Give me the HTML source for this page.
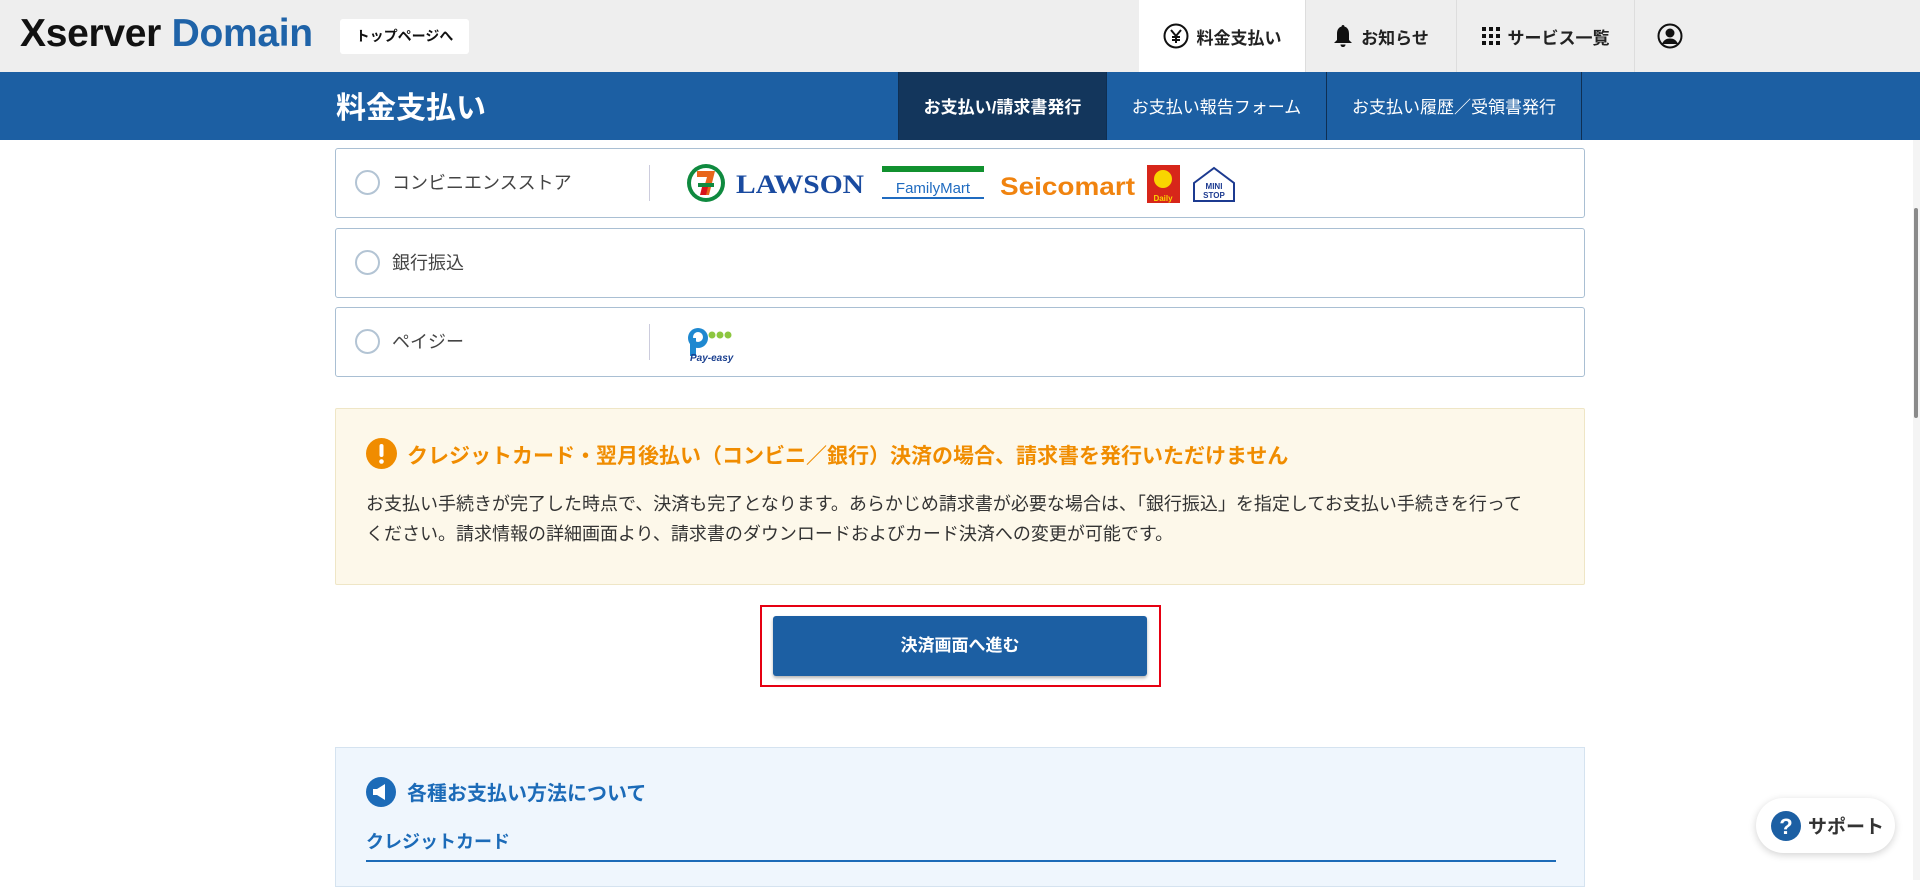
<!DOCTYPE html>
<html><head><meta charset="utf-8">
<style>
*{margin:0;padding:0;box-sizing:border-box}
body{width:1920px;height:880px;overflow:hidden;background:#fff;font-family:"Liberation Sans","Noto Sans CJK JP",sans-serif;color:#333;position:relative}
.a{position:absolute}
.hdr{left:0;top:0;width:1920px;height:72px;background:#eeeeee}
.logo{left:20px;top:12px;font-size:39px;font-weight:bold;letter-spacing:-0.3px;white-space:nowrap}
.topbtn{left:340px;top:19px;width:129px;height:35px;background:#fff;border-radius:3px;font-size:14px;font-weight:bold;color:#111;text-align:center;line-height:35px}
.nav{top:0;height:72px;display:flex;align-items:center;justify-content:center;font-size:17px;font-weight:bold;color:#222;border-left:1px solid #ddd;gap:8px}
.bar{left:0;top:72px;width:1920px;height:68px;background:#1c5fa3}
.ttl{left:336px;top:83px;font-size:30px;font-weight:bold;color:#fff}
.tab{top:72px;height:68px;color:#fff;font-size:17px;display:flex;align-items:center;justify-content:center;border-left:1px solid #0f2f52;padding-bottom:2px}
.row{left:335px;width:1250px;height:70px;border:1px solid #a9bfd3;border-radius:3px}
.radio{left:19px;width:25px;height:25px;border:2px solid #b3c4d4;border-radius:50%;top:21px}
.lbl{left:56px;top:20px;font-size:18px;color:#444}
.div{left:313px;top:16px;width:1px;height:36px;background:#ccd}
.warn{left:335px;top:408px;width:1250px;height:177px;background:#fdf8ea;border:1px solid #efe6c6;border-radius:2px}
.btn{left:773px;top:616px;width:374px;height:60px;background:#1c5fa3;border-radius:3px;color:#fff;font-size:17px;font-weight:bold;text-align:center;line-height:60px;box-shadow:0 2px 3px rgba(0,0,0,.3)}
.red{left:760px;top:605px;width:401px;height:82px;border:2px solid #e60012}
.info{left:335px;top:747px;width:1250px;height:140px;background:#eff6fd;border:1px solid #d5e3f0}
</style></head><body>
<div class="a hdr"></div>
<div class="a logo"><span style="color:#111">Xserver</span> <span style="color:#1f63a8">Domain</span></div>
<div class="a topbtn">トップページへ</div>
<div class="a nav" style="left:1139px;width:166px;background:#fff;border-left:none">
<svg width="26" height="26" viewBox="0 0 26 26"><circle cx="13" cy="13" r="11.5" fill="none" stroke="#111" stroke-width="2"/><path d="M8 7l5 6 5-6M13 13v7M9 14h8M9 17h8" fill="none" stroke="#111" stroke-width="2"/></svg>料金支払い</div>
<div class="a nav" style="left:1305px;width:151px">
<svg width="20" height="24" viewBox="0 0 20 24"><path d="M10 1c1 0 1.5.8 1.5 1.6C15 3.5 16 6.5 16 10v6l3 3H1l3-3v-6c0-3.5 1-6.5 4.5-7.4C8.5 1.8 9 1 10 1zM7.5 20.5h5c0 1.5-1 2.5-2.5 2.5s-2.5-1-2.5-2.5z" fill="#111"/></svg>お知らせ</div>
<div class="a nav" style="left:1456px;width:178px">
<svg width="18" height="18" viewBox="0 0 18 18" fill="#111"><rect x="0" y="0" width="4" height="4"/><rect x="7" y="0" width="4" height="4"/><rect x="14" y="0" width="4" height="4"/><rect x="0" y="7" width="4" height="4"/><rect x="7" y="7" width="4" height="4"/><rect x="14" y="7" width="4" height="4"/><rect x="0" y="14" width="4" height="4"/><rect x="7" y="14" width="4" height="4"/><rect x="14" y="14" width="4" height="4"/></svg>サービス一覧</div>
<div class="a nav" style="left:1634px;width:70px;border-right:none">
<svg width="26" height="26" viewBox="0 0 26 26"><circle cx="13" cy="13" r="11.5" fill="none" stroke="#111" stroke-width="2"/><circle cx="13" cy="10" r="4.5" fill="#111"/><path d="M5 21c1.5-4 4.5-5.5 8-5.5s6.5 1.5 8 5.5" fill="#111"/></svg></div>
<div class="a bar"></div>
<div class="a ttl">料金支払い</div>
<div class="a tab" style="left:898px;width:208px;background:#13365c;font-weight:bold">お支払い/請求書発行</div>
<div class="a tab" style="left:1106px;width:220px">お支払い報告フォーム</div>
<div class="a tab" style="left:1326px;width:256px;border-right:1px solid #0f2f52">お支払い履歴／受領書発行</div>

<div class="a row" style="top:148px"><div class="a radio"></div><div class="a lbl">コンビニエンスストア</div><div class="a div"></div>
<svg class="a" style="left:350px;top:14px" width="560" height="42" viewBox="0 0 560 42">
<circle cx="20" cy="20" r="19" fill="#0f8a3f"/><circle cx="20" cy="20" r="15" fill="#fff"/><path d="M11 8h18l-6 24h-7l5-18h-10z" fill="#e8651b"/><rect x="12" y="20" width="16" height="4" fill="#0f8a3f"/><path d="M16 24h6l-2 8h-6z" fill="#d8121b"/>
<text x="50" y="30" font-family="Liberation Serif,serif" font-weight="bold" font-size="26" fill="#1a4ba0" textLength="128" lengthAdjust="spacingAndGlyphs">LAWSON</text>
<rect x="196" y="3" width="102" height="6" fill="#11912f"/><text x="247" y="30" text-anchor="middle" font-size="15" fill="#1f6bc0">FamilyMart</text><rect x="196" y="34" width="102" height="2" fill="#1f6bc0"/>
<text x="314" y="32" font-weight="bold" font-size="25" fill="#f0830f" textLength="135" lengthAdjust="spacingAndGlyphs">Seicomart</text>
<rect x="461" y="2" width="33" height="38" fill="#d7261a"/><circle cx="477" cy="16" r="9" fill="#f9d500"/><text x="477" y="38" text-anchor="middle" font-size="8" fill="#f9d500" font-weight="bold">Daily</text>
<path d="M508 20l20-15 20 15v18h-40z" fill="none" stroke="#1c3a90" stroke-width="2"/><text x="528" y="26" text-anchor="middle" font-size="8" font-weight="bold" fill="#1c3a90">MINI</text><text x="528" y="35" text-anchor="middle" font-size="8" font-weight="bold" fill="#1c3a90">STOP</text>
</svg></div>
<div class="a row" style="top:228px"><div class="a radio"></div><div class="a lbl">銀行振込</div></div>
<div class="a row" style="top:307px"><div class="a radio"></div><div class="a lbl">ペイジー</div><div class="a div"></div>
<svg class="a" style="left:350px;top:15px" width="48" height="40" viewBox="0 0 48 40"><circle cx="12" cy="15" r="10" fill="#1e88d0"/><circle cx="12" cy="14" r="5" fill="#fff"/><rect x="4" y="15" width="6" height="18" fill="#1e88d0"/><circle cx="26" cy="12" r="3.5" fill="#8cc63f"/><circle cx="34" cy="12" r="3.5" fill="#8cc63f"/><circle cx="42" cy="12" r="3.5" fill="#8cc63f"/><text x="4" y="38" font-size="10" font-weight="bold" fill="#1a3f8f" font-style="italic">Pay-easy</text></svg></div>

<div class="a warn">
<svg class="a" style="left:30px;top:29px" width="31" height="31" viewBox="0 0 31 31"><circle cx="15.5" cy="15.5" r="15.5" fill="#f08c00"/><rect x="13.5" y="6" width="4" height="13" rx="2" fill="#fff"/><circle cx="15.5" cy="23.5" r="2.3" fill="#fff"/></svg>
<div class="a" style="left:71px;top:31px;font-size:21px;font-weight:bold;color:#f08c00;white-space:nowrap">クレジットカード・翌月後払い（コンビニ／銀行）決済の場合、請求書を発行いただけません</div>
<div class="a" style="left:30px;top:80px;width:1175px;font-size:18px;line-height:30px;color:#333">お支払い手続きが完了した時点で、決済も完了となります。あらかじめ請求書が必要な場合は、「銀行振込」を指定してお支払い手続きを行って<br>ください。請求情報の詳細画面より、請求書のダウンロードおよびカード決済への変更が可能です。</div>
</div>

<div class="a red"></div>
<div class="a btn">決済画面へ進む</div>

<div class="a info">
<svg class="a" style="left:30px;top:29px" width="30" height="30" viewBox="0 0 30 30"><circle cx="15" cy="15" r="15" fill="#1c6bb8"/><path d="M7 12h4l8-5v16l-8-5H7z" fill="#fff"/></svg>
<div class="a" style="left:71px;top:29px;font-size:20px;font-weight:bold;color:#1c6bb8">各種お支払い方法について</div>
<div class="a" style="left:30px;top:80px;font-size:18px;font-weight:bold;color:#1c6bb8">クレジットカード</div>
<div class="a" style="left:30px;top:112px;width:1190px;height:2px;background:#1c6bb8"></div>
</div>

<div class="a" style="left:1913px;top:140px;width:7px;height:740px;background:#f4f4f4"></div>
<div class="a" style="left:1914px;top:208px;width:4px;height:210px;background:#8a8a8a;border-radius:2px"></div>

<div class="a" style="left:1756px;top:798px;width:139px;height:55px;background:#fff;border-radius:28px;box-shadow:0 2px 8px rgba(0,0,0,.18)"></div>
<svg class="a" style="left:1771px;top:811px" width="30" height="30" viewBox="0 0 30 30"><circle cx="15" cy="15" r="15" fill="#1c5fa3"/><text x="15" y="23" text-anchor="middle" font-size="22" font-weight="bold" fill="#fff" font-family="Liberation Sans,sans-serif">?</text></svg>
<div class="a" style="left:1808px;top:812px;font-size:19px;font-weight:bold;color:#333">サポート</div>
</body></html>
